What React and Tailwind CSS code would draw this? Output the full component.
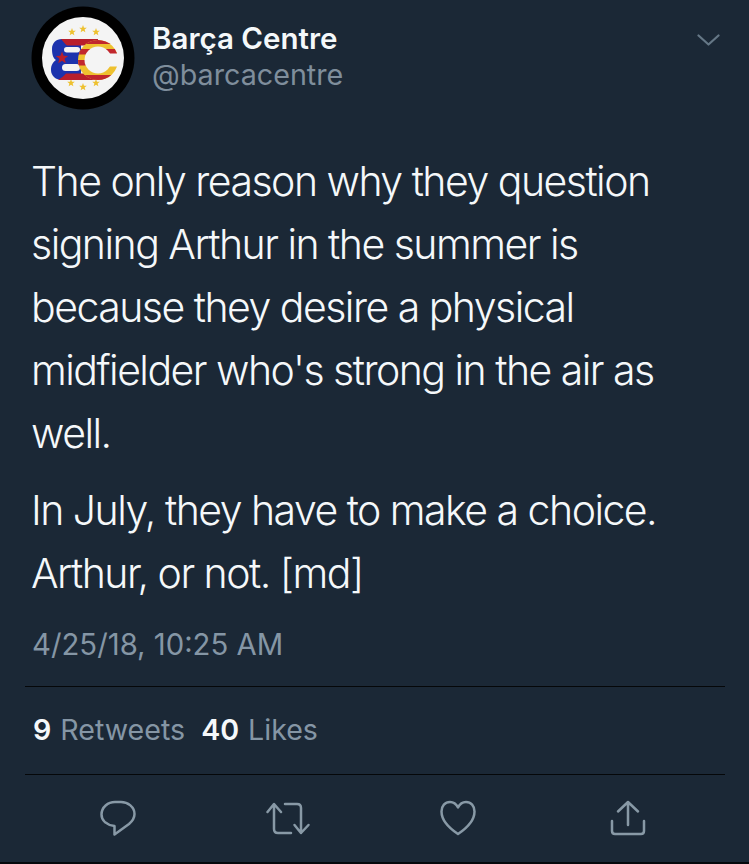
import React from "react";

const F = { fontFamily: '"Inter", "Liberation Sans", sans-serif' };

function Star({ x, y, r = 4, fill = "#eec12f" }) {
  const pts = [];
  for (let i = 0; i < 10; i++) {
    const rad = i % 2 === 0 ? r : r * 0.42;
    const a = (Math.PI / 5) * i - Math.PI / 2;
    pts.push(`${x + rad * Math.cos(a)},${y + rad * Math.sin(a)}`);
  }
  return <polygon points={pts.join(" ")} fill={fill} />;
}

function Logo() {
  return (
    <svg viewBox="0 0 104 104" className="w-[104px] h-[104px] shrink-0">
      <defs>
        <clipPath id="cclip">
          <circle cx="67" cy="54" r="20" />
        </clipPath>
      </defs>
      <circle cx="52" cy="52" r="51.5" fill="#000" />
      <circle cx="52" cy="52" r="41" fill="#f4f4f4" />
      <Star x={41} y={26} />
      <Star x={52} y={23} />
      <Star x={65} y={26} />
      <Star x={40} y={77} />
      <Star x={52} y={81} />
      <Star x={65} y={77} />
      <path d="M31 33H50V74H31C25 74 20 70 20 64C20 59 22 56 25 54C22 52 21 48 21 43C21 37 25 33 31 33Z" fill="#1d33ad" />
      <path d="M30 33H67V39.5H36C34 38 32 35 30 33Z" fill="#b81f2c" />
      <path d="M27 74H67V67.5H35C33 70 30 72 27 74Z" fill="#b81f2c" />
      <rect x="33" y="41" width="16" height="5.5" rx="2.75" fill="#f4f4f4" />
      <rect x="31" y="58" width="18" height="7" rx="3.5" fill="#f4f4f4" />
      <Star x={31} y={52} r={6.5} fill="#b81f2c" />
      <g clipPath="url(#cclip)">
        <rect x="46" y="33" width="42" height="42" fill="#eec12f" />
        <rect x="46" y="33" width="42" height="5" fill="#c1272d" />
        <rect x="46" y="43" width="42" height="5.5" fill="#c1272d" />
        <rect x="46" y="54" width="42" height="5.5" fill="#c1272d" />
        <rect x="46" y="69" width="42" height="5" fill="#c1272d" />
      </g>
      <circle cx="67" cy="54" r="13.5" fill="#f4f4f4" />
      <rect x="72" y="47.5" width="16" height="13" fill="#f4f4f4" />
    </svg>
  );
}

const iconProps = {
  fill: "none",
  stroke: "#8899a6",
  strokeWidth: "2.5",
  strokeLinejoin: "round",
  strokeLinecap: "round",
};

function Reply() {
  return (
    <svg viewBox="0 0 36 36" className="w-[36px] h-[36px]" {...iconProps}>
      <path d="M14.5 26C7 25 1.5 21 1.5 14.5C1.5 7 8 2 15 2H21C28 2 34.5 7 34.5 14C34.5 18 32.5 21 29 24L14.5 34.5Z" />
    </svg>
  );
}

function Retweet() {
  return (
    <svg viewBox="0 0 45 36" className="w-[45px] h-[36px]" {...iconProps}>
      <path d="M1.5 12L8 4L15 12M8 4.5V29Q8 33 12 33H25" />
      <path d="M19 4H31Q35 4 35 8V33M28.5 25L35 33L42.5 25" />
    </svg>
  );
}

function Heart() {
  return (
    <svg viewBox="0 0 36 36" className="w-[36px] h-[36px]" {...iconProps}>
      <path d="M18 7.5C16 3.5 13 2 10 2C5 2 1.5 6 1.5 11.5C1.5 20 9 28 18 34C27 28 34.5 20 34.5 11.5C34.5 6 31 2 26 2C23 2 20 3.5 18 7.5Z" />
    </svg>
  );
}

function Share() {
  return (
    <svg viewBox="0 0 36 36" className="w-[36px] h-[36px]" {...iconProps}>
      <path d="M18 25V2M8 11.5L18 2L28 11.5" />
      <path d="M2 21V31Q2 34 5 34H31Q34 34 34 31V21" />
    </svg>
  );
}

export default function App() {
  return (
    <div style={F} className="w-[749px] h-[864px] bg-[#1b2836] overflow-hidden flex flex-col antialiased border-b-2 border-[#05080c]">
      <header className="flex items-start pl-[31px] pr-[29px] pt-[6px]">
        <Logo />
        <div className="ml-[17px] mt-[14px] flex-1">
          <div className="text-[29.5px] leading-[36px] font-semibold text-[#f5f8fa]">Barça Centre</div>
          <div className="text-[28.7px] leading-[38px] text-[#7f8e9c]">@barcacentre</div>
        </div>
        <svg viewBox="0 0 23 12" className="w-[23px] h-[12px] mt-[28px]" fill="none" stroke="#657786" strokeWidth="2.2" strokeLinecap="round" strokeLinejoin="round">
          <path d="M1.5 1.5L11.5 10.5L21.5 1.5" />
        </svg>
      </header>

      <main className="pl-[31px] pr-[20px] pt-[40px] text-[#f5f8fa] text-[41px] leading-[63px] tracking-[-1.52px] font-[350]">
        <p>
          The only reason why they question
          <br />
          signing Arthur in the summer is
          <br />
          because they desire a physical
          <br />
          midfielder who's strong in the air as
          <br />
          well.
        </p>
        <p className="mt-[14px]">
          In July, they have to make a choice.
          <br />
          Arthur, or not. [md]
        </p>
      </main>

      <div className="px-[32px] pt-[20px] text-[29.3px] leading-[40px] text-[#8596a5]">4/25/18, 10:25 AM</div>

      <div className="ml-[25px] mr-[24px] mt-[21px] border-t border-[#050709]" />

      <div className="mx-[25px] h-[87px] px-[8px] flex items-center text-[28.6px] text-[#8596a5]">
        <span className="font-semibold text-[#f5f8fa]">9</span>
        <span className="ml-[9px]">Retweets</span>
        <span className="ml-[16px] font-semibold text-[#f5f8fa]">40</span>
        <span className="ml-[9px]">Likes</span>
      </div>

      <div className="ml-[25px] mr-[24px] border-t border-[#050709]" />

      <footer className="h-[87px] flex items-start pt-[25px]">
        <div className="ml-[100px]"><Reply /></div>
        <div className="ml-[130px]"><Retweet /></div>
        <div className="ml-[129px]"><Heart /></div>
        <div className="ml-[134px]"><Share /></div>
      </footer>
    </div>
  );
}
